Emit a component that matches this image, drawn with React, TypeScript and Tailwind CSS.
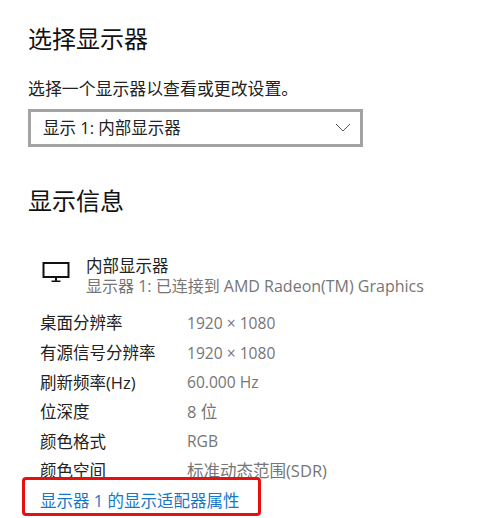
const rows = [
  ["桌面分辨率", "1920 × 1080", "text-[15.6px]"],
  ["有源信号分辨率", "1920 × 1080", "text-[15.6px]"],
  ["刷新频率(Hz)", "60.000 Hz", "text-[15.6px]"],
  ["位深度", "8 位", "text-[16.5px]"],
  ["颜色格式", "RGB", "text-[15.6px]"],
  ["颜色空间", "标准动态范围(SDR)", "text-[16.5px]"],
];

export default function App() {
  return (
    <div className="relative w-[500px] h-[518px] overflow-hidden bg-white text-[#1a1a1a] font-['Open_Sans','Noto_Sans_CJK_SC',sans-serif]">
      <div className="pl-[28px] pt-[22px]">
        <h1 className="text-[24px] leading-[34px] font-normal text-[#111]">选择显示器</h1>
        <p className="mt-[21px] text-[16.9px] leading-[24px] text-[#222]">选择一个显示器以查看或更改设置。</p>
        <div className="mt-[8px] w-[335px] h-[38px] border-[3px] border-[#a3a3a3] flex items-center justify-between pl-[12px] pr-[9px] text-[16.5px] text-[#222]">
          <span>显示 1: 内部显示器</span>
          <svg width="16" height="10" viewBox="0 0 16 10" fill="none" stroke="#555" strokeWidth="1">
            <path d="M1 1l7 7 7-7" />
          </svg>
        </div>
        <h2 className="mt-[37px] text-[24px] leading-[34px] font-normal text-[#111]">显示信息</h2>
        <div className="mt-[39px] ml-[14px] flex items-start gap-[16px]">
          <svg className="mt-[5px]" width="28" height="20" viewBox="0 0 28 20" fill="none" stroke="#111" strokeWidth="2">
            <rect x="1.5" y="1" width="25" height="14" />
            <path d="M14 15v4" />
            <path d="M9.5 19.25h9" strokeWidth="1.5" />
          </svg>
          <div className="-mt-[1px]">
            <div className="text-[16.5px] leading-[20px] text-[#222]">内部显示器</div>
            <div className="text-[16px] leading-[20px] text-[#767676]">显示器 1: 已连接到 AMD Radeon(TM) Graphics</div>
          </div>
        </div>
        <div className="mt-[13px] ml-[12px] flex flex-col">
          {rows.map(([k, v, size]) => (
            <div key={k} className="flex h-[29.6px] items-center text-[16.5px]">
              <span className="w-[147px] text-[#222]">{k}</span>
              <span className={`text-[#767676] ${size}`}>{v}</span>
            </div>
          ))}
        </div>
      </div>
      <div className="absolute left-[22px] top-[477px] w-[239px] h-[39px] border-[3px] border-[#e8100f] rounded-[4px] bg-white flex items-center pl-[15px] pt-[9px] text-[16.5px] text-[#1878c8]">
        显示器 1 的显示适配器属性
      </div>
    </div>
  );
}
